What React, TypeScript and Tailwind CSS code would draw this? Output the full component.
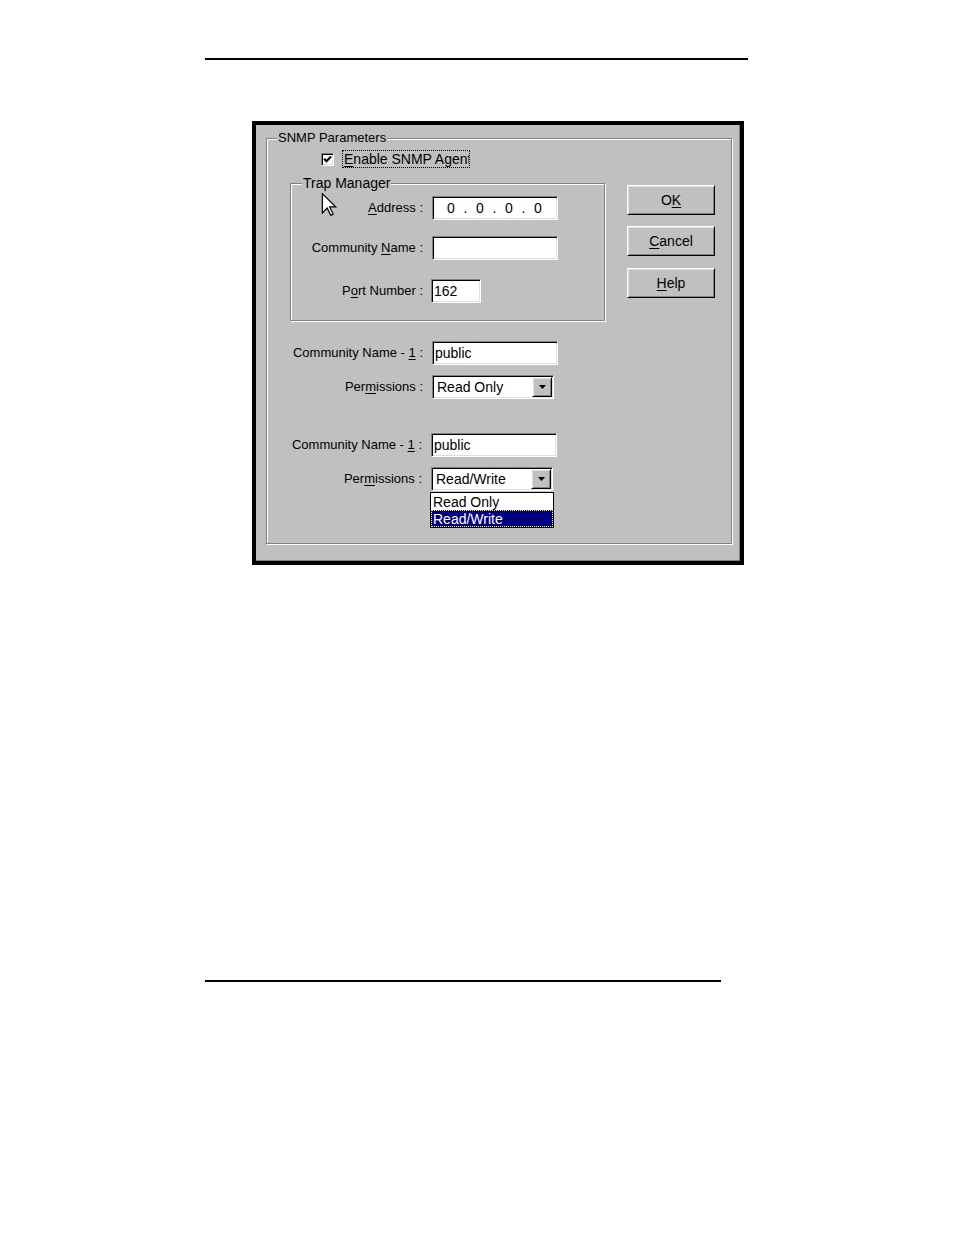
import React from 'react';

const sunken =
  'border border-t-[#808080] border-l-[#808080] border-b-white border-r-white shadow-[inset_1px_1px_0_#000,inset_-1px_-1px_0_#dfdfdf] bg-white';
const raised =
  'border border-t-white border-l-white border-b-black border-r-black shadow-[inset_1px_1px_0_#dfdfdf,inset_-1px_-1px_0_#808080] bg-[#c0c0c0]';
const etched = 'border border-[#808080] shadow-[inset_1px_1px_0_#fff,1px_1px_0_#fff]';

const U = ({ children }: { children: React.ReactNode }) => (
  <span className="underline underline-offset-[2px] decoration-1">{children}</span>
);

const TextBox = ({ value, className = '' }: { value?: string; className?: string }) => (
  <div className={`${sunken} h-[24px] flex items-center pl-[2px] leading-none ${className}`}>{value}</div>
);

const Combo = ({ value, className = '', open = false }: { value: string; className?: string; open?: boolean }) => (
  <div className={`relative ${sunken} h-[24px] w-[122px] p-[1px] flex ${className}`}>
    <div className="flex-1 flex items-center pl-[3px] text-[14px] leading-none">{value}</div>
    <div className={`${raised} w-[20px] h-full flex items-center justify-center`}>
      <svg width="7" height="4" viewBox="0 0 7 4">
        <path d="M0 0h7L3.5 4z" fill="#000" />
      </svg>
    </div>
    {open && (
      <div className="absolute left-[-2px] top-[24px] w-[124px] border border-black bg-white text-[14px] leading-none">
        <div className="h-[17px] flex items-center pl-[2px]">Read Only</div>
        <div className="h-[17px] flex items-center pl-[1px] bg-[#000080] text-white border border-dotted border-[#ffff99]">
          Read/Write
        </div>
      </div>
    )}
  </div>
);

const Button = ({ children, className = '' }: { children: React.ReactNode; className?: string }) => (
  <div className={`${raised} w-[88px] h-[30px] flex items-center justify-center text-[14px] ${className}`}>{children}</div>
);

const Row = ({ label, w, gap = 9, children, className = '' }: { label: React.ReactNode; w: string; gap?: number; children: React.ReactNode; className?: string }) => (
  <div className={`flex items-center h-[24px] ${className}`}>
    <div className={`${w} text-right whitespace-nowrap`}>{label}</div>
    <div className={gap === 9 ? 'ml-[9px]' : 'ml-[8px]'}>{children}</div>
  </div>
);

export default function App() {
  return (
    <div className="w-[954px] h-[1235px] bg-white overflow-hidden text-black text-[13px] font-['Liberation_Sans',Arial,sans-serif]">
      <div className="pt-[58px]">
        <div className="ml-[205px] w-[543px] h-[2px] bg-black" />
      </div>

      {/* dialog */}
      <div className="relative ml-[252px] mt-[61px] w-[492px] h-[444px] border-[4px] border-black bg-[#c0c0c0] shadow-[inset_-1px_-1px_0_#808080]">
        <div className={`ml-[10px] mt-[13px] w-[466px] h-[406px] ${etched}`}>
          <div className="-mt-[9px] ml-[10px] px-[1px] w-fit bg-[#c0c0c0] leading-[16px]">SNMP Parameters</div>

          <div className="mt-[4px] ml-[54px] h-[18px] flex items-center">
            <div className={`${sunken} w-[13px] h-[13px] flex items-center justify-center`}>
              <svg width="9" height="9" viewBox="0 0 9 9">
                <path d="M1.2 3.8l2.3 2.4L8 1.6" stroke="#000" strokeWidth="2.2" fill="none" />
              </svg>
            </div>
            <div className="ml-[8px] w-[128px] h-[18px] border border-dotted border-black overflow-hidden whitespace-nowrap pl-[1px] leading-[16px] text-[14px]">
              <U>E</U>nable SNMP Agent
            </div>
          </div>

          <div className="mt-[15px] flex">
            <div className={`ml-[23px] w-[315px] h-[138px] ${etched}`}>
              <div className="-mt-[9px] ml-[11px] px-[1px] w-fit bg-[#c0c0c0] leading-[16px] text-[14px]">Trap Manager</div>
              <Row label={<><U>A</U>ddress :</>} w="w-[132px]" className="mt-[5px]">
                <div className={`${sunken} w-[126px] h-[24px] flex items-center pl-[7px] text-[14px]`}>
                  {['0', '.', '0', '.', '0', '.', '0'].map((c, i) => (
                    <span key={i} className={c === '.' ? 'w-[7px] text-center' : 'w-[22px] text-center'}>{c}</span>
                  ))}
                </div>
              </Row>
              <Row label={<>Community <U>N</U>ame :</>} w="w-[132px]" className="mt-[16px]">
                <TextBox className="w-[126px]" />
              </Row>
              <Row label={<>P<U>o</U>rt Number :</>} w="w-[132px]" gap={8} className="mt-[19px]">
                <TextBox value="162" className="w-[50px] text-[14px]" />
              </Row>
            </div>

            <div className="ml-[22px] mt-[2px]">
              <Button>O<U>K</U></Button>
              <Button className="mt-[11px]"><U>C</U>ancel</Button>
              <Button className="mt-[12px]"><U>H</U>elp</Button>
            </div>
          </div>

          <Row label={<>Community Name - <U>1</U> :</>} w="w-[156px]" className="mt-[20px]">
            <TextBox value="public" className="w-[126px] text-[14px]" />
          </Row>
          <Row label={<>Per<U>m</U>issions :</>} w="w-[156px]" className="mt-[10px]">
            <Combo value="Read Only" />
          </Row>
          <Row label={<>Community Name - <U>1</U> :</>} w="w-[155px]" className="mt-[34px]">
            <TextBox value="public" className="w-[126px] text-[14px]" />
          </Row>
          <Row label={<>Per<U>m</U>issions :</>} w="w-[155px]" className="mt-[10px]">
            <Combo value="Read/Write" open />
          </Row>
        </div>

        {/* mouse pointer */}
        <svg className="absolute left-[64px] top-[68px]" width="18" height="23" viewBox="0 0 12 19">
          <path d="M0.5 0.5V16.5L4.5 12.5L7.5 18.5L9.5 17.5L6.5 11.5H11.5Z" fill="#fff" stroke="#000" strokeWidth="1" strokeLinejoin="miter" />
        </svg>
      </div>

      <div className="ml-[205px] mt-[415px] w-[516px] h-[2px] bg-black" />
    </div>
  );
}
